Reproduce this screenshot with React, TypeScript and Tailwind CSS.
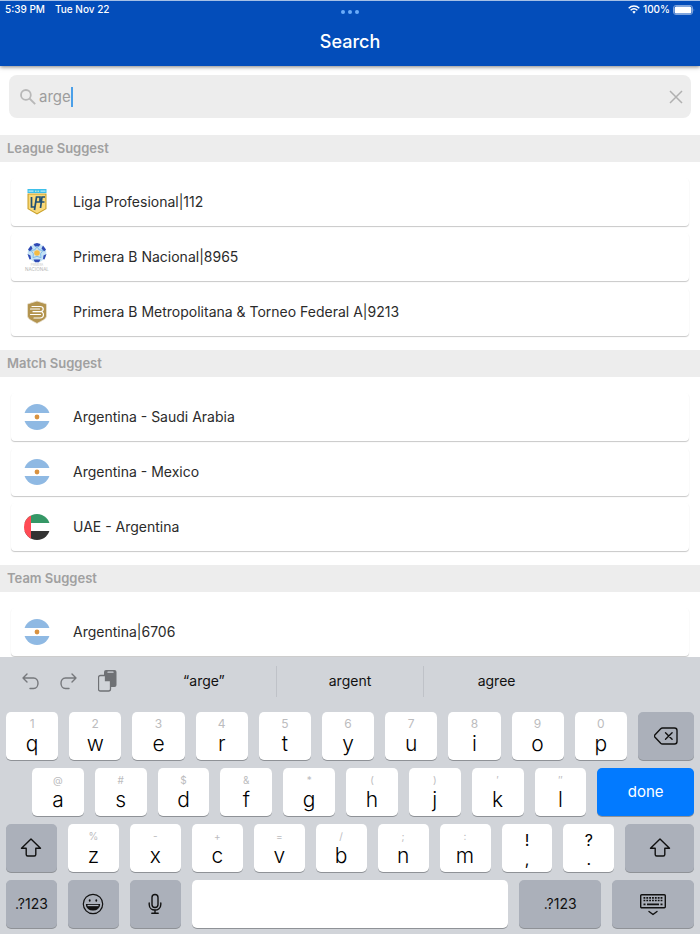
import React, { useState } from 'react';

interface KeyDef {
  label: string;
  hint: string;
}

interface Suggestion {
  title: string;
  icon: React.ReactNode;
}

const ArgentinaFlag = () => (
  <svg className="w-[26px] h-[26px]" viewBox="0 0 26 26">
    <clipPath id="arg"><circle cx="13" cy="13" r="13" /></clipPath>
    <g clipPath="url(#arg)">
      <rect width="26" height="26" fill="#fff" />
      <rect width="26" height="9" fill="#8fb9e3" />
      <rect y="17" width="26" height="9" fill="#8fb9e3" />
    </g>
    <circle cx="13" cy="13" r="2.4" fill="#d9923f" />
  </svg>
);

const UaeFlag = () => (
  <svg className="w-[26px] h-[26px]" viewBox="0 0 26 26">
    <clipPath id="uae"><circle cx="13" cy="13" r="13" /></clipPath>
    <g clipPath="url(#uae)">
      <rect width="26" height="26" fill="#fff" />
      <rect width="26" height="9" fill="#359766" />
      <rect y="17" width="26" height="9" fill="#333" />
      <rect width="7" height="26" fill="#ff4b55" />
    </g>
  </svg>
);

const LigaBadge = () => (
  <svg className="w-[26px] h-[26px]" viewBox="0 0 26 26">
    <path d="M3.5 0h19v4h-19z" fill="#3ec0ea" />
    <path d="M4.5 2.2h5M16.5 2.2h5" stroke="#b5e8f8" strokeWidth="1.2" />
    <path d="M11 2.2h4" stroke="#e8f7d0" strokeDasharray="1 .5" />
    <path d="M3.5 4.5h19V20L13 25.5 3.5 20z" fill="#c9a028" />
    <path d="M4.6 5.4h16.800v14L13 24.2l-8.400-4.800z" fill="#f9d97a" />
    <path d="M7.500 8v10h3.500M10.500 21l2-13h3.500v5h-4M16.500 19l1.500-11h3M14.500 13h6" fill="none" stroke="#1f4f74" strokeWidth="1.700" />
  </svg>
);

const NacionalBadge = () => (
  <svg className="w-[26px] h-[28px]" viewBox="0 0 26 28">
    <circle cx="13" cy="10" r="9.300" fill="#c4e2f5" />
    <path d="M9.500.9l3.500-.9 3.500.9L15 3.500h-4zM4 6.500L7 2.500l1.500 3L6 8.500zM22 6.500l-3-4-1.500 3L20 8.500zM3.500 11l3 1.500.5 3.500-1.500.5zM22.500 11l-3 1.500-.5 3.500 1.500.5zM9.500 16.500h7l-1.500 2.800h-4z" fill="#2f49b4" />
    <path d="M13 3.500l2 3.300 4 .7-2.400 3.200.4 4-4-1.400-4 1.400.4-4L7 7.500l4-.7z" fill="#d5e2e4" stroke="#7fbdec" />
    <circle cx="13" cy="10" r="2.800" fill="#f3bb45" />
    <text x="13" y="22.800" textAnchor="middle" fontSize="2.800" fill="#c4c4c4" fontFamily="Inter, sans-serif">PRIMERA</text>
    <text x="13" y="27.500" textAnchor="middle" fontSize="4.600" fill="#b4b4b4" fontFamily="Inter, sans-serif">NACIONAL</text>
  </svg>
);

const FederalBadge = () => (
  <svg className="w-[26px] h-[26px]" viewBox="0 0 26 26">
    <path d="M13 2l9.500 3v12c0 3-5 5-9.500 7.500C8.500 22 3.500 20 3.500 17V5z" fill="#b3944f" stroke="#e9e1d0" strokeWidth=".8" />
    <path d="M8 7.500h8c4.500 0 4 5 .5 5 4 0 4 6.500-.5 6.500H10M6.500 10h9M9 12.700h7.500M6.500 15.500h10" fill="none" stroke="#fff" strokeWidth="1.200" strokeLinecap="round" />
  </svg>
);

const ShiftIcon = () => (
  <svg className="w-6 h-6" viewBox="0 0 24 24" fill="none" stroke="#111" strokeWidth="1.400" strokeLinejoin="round">
    <path d="M12 3L2.500 12.300h4.700v6.200q0 1.500 1.500 1.500h6.600q1.500 0 1.500-1.500v-6.200h4.700z" />
  </svg>
);

const BackspaceIcon = () => (
  <svg className="w-6 h-6" viewBox="0 0 24 24" fill="none" stroke="#111" strokeWidth="1.400" strokeLinecap="round" strokeLinejoin="round">
    <path d="M8.500 4H20.500q2.500 0 2.500 2.500v11q0 2.500-2.500 2.500H8.500q-1 0-1.800-.8L.8 13q-.8-1 0-2l5.900-6.200Q7.500 4 8.500 4z" />
    <path d="M11.500 8.700l6.600 6.600M18.100 8.700l-6.600 6.600" />
  </svg>
);

const EmojiIcon = () => (
  <svg className="w-6 h-6" viewBox="0 0 24 24" fill="none" stroke="#111" strokeWidth="1.200">
    <circle cx="12" cy="12" r="9.700" />
    <ellipse cx="8.700" cy="8.500" rx=".9" ry="1.300" fill="#111" stroke="none" />
    <ellipse cx="15.300" cy="8.500" rx=".9" ry="1.300" fill="#111" stroke="none" />
    <path d="M5.500 12.500h13c0 3.500-3 5.500-6.500 5.500s-6.500-2-6.500-5.500z" fill="#111" />
    <path d="M6.500 13.500h11" stroke="#b0b5bf" strokeWidth="1.300" />
  </svg>
);

const MicIcon = () => (
  <svg className="w-6 h-6" viewBox="0 0 24 24" fill="none" stroke="#111" strokeWidth="1.400" strokeLinecap="round">
    <rect x="9" y="2.500" width="6" height="13" rx="3" />
    <path d="M6.200 11v1.500c0 7.400 11.600 7.400 11.600 0V11M12 18v3M8.800 21.300h6.400" />
  </svg>
);

const HideKeyboardIcon = () => (
  <svg className="w-[26px] h-6" viewBox="0 0 26 24" fill="none" stroke="#111" strokeWidth="1.400">
    <rect x=".7" y="2.700" width="24.600" height="13" rx="1" />
    <path d="M3.500 5.800h19M3.500 8.500h19" strokeWidth="1.700" strokeDasharray="1.800 1.050" />
    <path d="M3.500 12.300h2M7 12.300h12M20.500 12.300h2" strokeWidth="1.700" />
    <path d="M9 19.500l4 3 4-3" strokeLinecap="round" strokeLinejoin="round" />
  </svg>
);

const sections: { heading: string; items: Suggestion[] }[] = [
  {
    heading: 'League Suggest',
    items: [
      { title: 'Liga Profesional|112', icon: <LigaBadge /> },
      { title: 'Primera B Nacional|8965', icon: <NacionalBadge /> },
      { title: 'Primera B Metropolitana & Torneo Federal A|9213', icon: <FederalBadge /> },
    ],
  },
  {
    heading: 'Match Suggest',
    items: [
      { title: 'Argentina - Saudi Arabia', icon: <ArgentinaFlag /> },
      { title: 'Argentina - Mexico', icon: <ArgentinaFlag /> },
      { title: 'UAE - Argentina', icon: <UaeFlag /> },
    ],
  },
  {
    heading: 'Team Suggest',
    items: [{ title: 'Argentina|6706', icon: <ArgentinaFlag /> }],
  },
];

const toKeys = (letters: string, hints: string): KeyDef[] =>
  letters.split('').map((label, i) => ({ label, hint: hints[i] }));

const topRow = toKeys('qwertyuiop', '1234567890');
const homeRow = toKeys('asdfghjkl', '@#$&*()′″');
const bottomRow = toKeys('zxcvbnm', '%-+=/;:');

const LetterKey: React.FC<{ def: KeyDef; onPress: (s: string) => void; small?: boolean }> = ({ def, onPress, small }) => (
  <button
    onClick={() => onPress(def.label)}
    className="flex-[52] min-w-0 h-12 rounded-[5px] bg-white shadow-[0_1px_0_#8f9297] flex flex-col items-center pt-1 text-black"
  >
    <span className={small ? 'text-[10px] leading-4 text-[#bcbcbe]' : 'text-xs leading-4 text-[#bcbcbe]'}>{def.hint}</span>
    <span className="text-[21px] leading-6 font-light">{def.label}</span>
  </button>
);

const PunctuationKey: React.FC<{ upper: string; lower: string; onPress: (s: string) => void }> = ({ upper, lower, onPress }) => (
  <button
    onClick={() => onPress(lower)}
    className="flex-[52] min-w-0 h-12 rounded-[5px] bg-white shadow-[0_1px_0_#8f9297] flex flex-col items-center pt-1.5 text-black text-base"
  >
    <span className="leading-5">{upper}</span>
    <span className="leading-5 -mt-px">{lower}</span>
  </button>
);

const App: React.FC = () => {
  const [query, setQuery] = useState('arge');
  const press = (s: string) => setQuery(prev => prev + s);

  return (
    <div className="h-screen flex flex-col bg-white overflow-hidden font-['Inter','Liberation_Sans',sans-serif]">
      <header className="relative z-10 shrink-0 bg-[#034dba] border-t border-[#a5c0e6] text-white shadow-[0_1px_4px_rgba(0,0,0,0.5)]">
        <div className="grid grid-cols-3 items-center h-[17px] px-[5px] text-[10px] font-medium">
          <div className="flex gap-[10px]">
            <span>5:39 PM</span>
            <span>Tue Nov 22</span>
          </div>
          <div className="flex justify-center gap-[3px] pt-1">
            <span className="w-1 h-1 rounded-full bg-[#6bacfa]" />
            <span className="w-1 h-1 rounded-full bg-[#6bacfa]" />
            <span className="w-1 h-1 rounded-full bg-[#6bacfa]" />
          </div>
          <div className="flex justify-end items-center gap-[3px]">
            <svg className="w-3 h-[9px]" viewBox="0 0 12 9" fill="none" stroke="#fff" strokeWidth="1.500">
              <path d="M.7 3.200c3-2.800 7.600-2.800 10.600 0M2.600 5.200c2-1.800 4.800-1.800 6.800 0" />
              <path d="M4.300 6.800q1.700-1.400 3.400 0L6 8.700z" fill="#fff" stroke="none" />
            </svg>
            <span>100%</span>
            <svg className="w-[22px] h-[10px]" viewBox="0 0 22 10">
              <rect x=".5" y=".5" width="19" height="9" rx="2.500" fill="none" stroke="#7fa4dc" />
              <rect x="1.600" y="1.600" width="16.800" height="6.800" rx="1.500" fill="#fff" />
              <path d="M20.700 3.500q1.200 1.500 0 3z" fill="#7fa4dc" />
            </svg>
          </div>
        </div>
        <h1 className="h-12 text-center text-lg leading-[48px] font-medium">Search</h1>
      </header>

      <main className="flex-1 min-h-0 overflow-hidden">
        <div className="mx-[9px] mt-[9px] mb-[17px] h-[43px] rounded-lg bg-[#ededed] flex items-center pl-[11px] pr-[7px]">
          <svg className="w-4 h-4 shrink-0" viewBox="0 0 16 16" fill="none" stroke="#b8b8b8" strokeWidth="1.800">
            <circle cx="5.900" cy="5.900" r="4.900" />
            <path d="M9.500 9.500l5.700 5.700" />
          </svg>
          <div className="relative flex-1 ml-[3px] flex items-center">
            <input
              aria-label="Search"
              className="w-full bg-transparent outline-none text-[15px] leading-6 text-[#9d9d9d]"
              value={query}
              onChange={e => setQuery(e.target.value)}
            />
            {/* caret follows an invisible copy of the typed text */}
            <span className="absolute left-0 flex items-center text-[15px] leading-6 pointer-events-none" aria-hidden="true">
              <span className="invisible">{query}</span>
              <span className="w-0.5 h-5 bg-[#4a9fe8]" />
            </span>
          </div>
          <button aria-label="Clear" onClick={() => setQuery('')}>
            <svg className="w-4 h-4" viewBox="0 0 16 16" stroke="#b0b0b0" strokeWidth="1.500">
              <path d="M2 2l12 12M14 2L2 14" />
            </svg>
          </button>
        </div>

        {sections.map(section => (
          <section key={section.heading}>
            <h2 className="h-[27px] bg-[#ededed] px-[7px] text-[13px] leading-[27px] font-semibold text-[#a0a0a0]">{section.heading}</h2>
            <ul className="flex flex-col gap-[7px] px-[11px] pt-4 pb-3.5">
              {section.items.map(item => (
                <li key={item.title}>
                  <button className="w-full h-12 rounded bg-white shadow-[0_1px_1px_rgba(0,0,0,0.22)] flex items-center text-left px-[13px]">
                    <span className="w-[26px] flex justify-center">{item.icon}</span>
                    <span className="ml-[23px] text-sm text-[#2b2b2b]">{item.title}</span>
                  </button>
                </li>
              ))}
            </ul>
          </section>
        ))}
      </main>

      <div className="relative z-10 shrink-0 bg-[#d1d4d9] px-1.5 pb-1.5">
        <div className="flex items-center h-[55px] pb-[7px] text-sm text-[#111]">
          <div className="flex-[126] min-w-0">
            <div className="flex items-center pl-4 gap-[21px]">
              <button aria-label="Undo">
                <svg className="w-[17px] h-[17px]" viewBox="0 0 17 17" fill="none" stroke="#76787c" strokeWidth="1.400" strokeLinecap="round" strokeLinejoin="round">
                  <path d="M5 1L1 5l4 4M1 5h10.500c6 0 6 10.500 0 10.500H8" />
                </svg>
              </button>
              <button aria-label="Redo">
                <svg className="w-[17px] h-[17px]" viewBox="0 0 17 17" fill="none" stroke="#76787c" strokeWidth="1.400" strokeLinecap="round" strokeLinejoin="round">
                  <path d="M12 1l4 4-4 4M16 5H5.500c-6 0-6 10.500 0 10.500H9" />
                </svg>
              </button>
              <button aria-label="Paste">
                <svg className="w-[19px] h-[22px]" viewBox="0 0 19 22">
                  <rect x="6" y="0" width="12.500" height="17" rx="2" fill="#6f7175" />
                  <path d="M10 2.200h5" stroke="#d1d4d9" strokeWidth="1.300" strokeLinecap="round" />
                  <path d="M2.500 5.500h5l5 5v8.500q0 2-2 2h-8q-2 0-2-2V7.500q0-2 2-2z" fill="#d1d4d9" stroke="#6f7175" strokeWidth="1.300" />
                  <path d="M7.500 5.500v5h5z" fill="#6f7175" stroke="#6f7175" strokeWidth="1.300" />
                </svg>
              </button>
            </div>
          </div>
          <button className="flex-[145] h-[31px] border-r border-[#bfc2c8]">“arge”</button>
          <button className="flex-[146] h-[31px] border-r border-[#bfc2c8]">argent</button>
          <button className="flex-[146] h-[31px]">agree</button>
          <span className="flex-[125]" />
        </div>

        <div className="flex flex-col gap-2">
          <div className="flex gap-[11px]">
            {topRow.map(k => <LetterKey key={k.label} def={k} onPress={press} />)}
            <button aria-label="Delete" onClick={() => setQuery(prev => prev.slice(0, -1))} className="flex-[56] h-12 rounded-[5px] bg-[#abb0ba] shadow-[0_1px_0_#8f9297] flex items-center justify-center">
              <BackspaceIcon />
            </button>
          </div>
          <div className="flex gap-[11px] pl-[26px]">
            {homeRow.map(k => <LetterKey key={k.label} def={k} onPress={press} small />)}
            <button className="flex-[97] h-12 rounded-[5px] bg-[#027aff] shadow-[0_1px_0_#8f9297] text-white text-[15px]">done</button>
          </div>
          <div className="flex gap-[11px]">
            <button aria-label="Shift" className="flex-[52] h-12 rounded-[5px] bg-[#abb0ba] shadow-[0_1px_0_#8f9297] flex items-center justify-center">
              <ShiftIcon />
            </button>
            {bottomRow.map(k => <LetterKey key={k.label} def={k} onPress={press} small />)}
            <PunctuationKey upper="!" lower="," onPress={press} />
            <PunctuationKey upper="?" lower="." onPress={press} />
            <button aria-label="Right shift" className="flex-[70] h-12 rounded-[5px] bg-[#abb0ba] shadow-[0_1px_0_#8f9297] flex items-center justify-center">
              <ShiftIcon />
            </button>
          </div>
          <div className="flex gap-[11px]">
            <button className="flex-[51] min-w-0 h-12 rounded-[5px] bg-[#abb0ba] shadow-[0_1px_0_#8f9297] text-sm text-[#111]">.?123</button>
            <button aria-label="Emoji" className="flex-[51] h-12 rounded-[5px] bg-[#abb0ba] shadow-[0_1px_0_#8f9297] flex items-center justify-center">
              <EmojiIcon />
            </button>
            <button aria-label="Dictate" className="flex-[51] h-12 rounded-[5px] bg-[#abb0ba] shadow-[0_1px_0_#8f9297] flex items-center justify-center">
              <MicIcon />
            </button>
            <button aria-label="Space" onClick={() => press(' ')} className="flex-[317] h-12 rounded-[5px] bg-white shadow-[0_1px_0_#8f9297]" />
            <button className="flex-[82] h-12 rounded-[5px] bg-[#abb0ba] shadow-[0_1px_0_#8f9297] text-sm text-[#111]">.?123</button>
            <button aria-label="Hide keyboard" className="flex-[82] h-12 rounded-[5px] bg-[#abb0ba] shadow-[0_1px_0_#8f9297] flex items-center justify-center">
              <HideKeyboardIcon />
            </button>
          </div>
        </div>
      </div>
    </div>
  );
};

export default App;
